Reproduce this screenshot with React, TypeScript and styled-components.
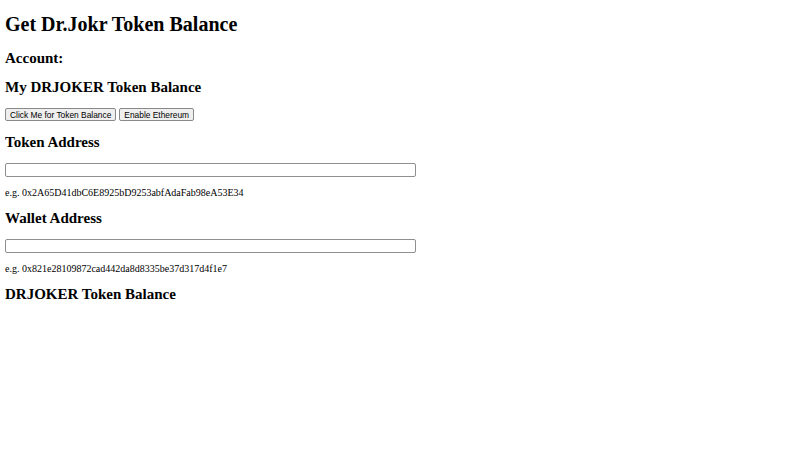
import React from "react";
import styled, { createGlobalStyle } from "styled-components";

const Global = createGlobalStyle`
  html, body { background: #fff; }
  body {
    margin: 5px;
    font-family: "Liberation Serif", "Times New Roman", serif;
    font-size: 10px;
    color: #000;
  }
`;

const Page = styled.main`
  display: block;
`;

const Title = styled.h1`
  font-size: 20px;
  font-weight: bold;
  margin: 8px 0 14px;
`;

const Heading = styled.h2`
  font-size: 15px;
  font-weight: bold;
  margin: 12.2px 0;
`;

const ButtonRow = styled.div`
  display: flex;
  gap: 3px;
  margin: 9.8px 0;
`;

const Button = styled.button`
  font-family: "Liberation Sans", Arial, sans-serif;
  font-size: 8.4px;
  height: 13px;
  padding: 0 4px;
  background: #efefef;
  color: #000;
  border: 1px solid #8a8a8a;
  border-radius: 2px;
  line-height: 1;
`;

const Field = styled.input`
  display: block;
  box-sizing: border-box;
  width: 411px;
  height: 14px;
  margin: 0;
  padding: 0 2px;
  border: 1px solid #8f8f8f;
  border-radius: 2px;
  background: #fff;
  font-family: "Liberation Sans", Arial, sans-serif;
  font-size: 8px;
`;

const Hint = styled.p`
  margin: 9.8px 0;
`;

export default function App() {
  return (
    <>
      <Global />
      <Page>
        <Title>Get Dr.Jokr Token Balance</Title>
        <Heading>Account:</Heading>
        <Heading>My DRJOKER Token Balance</Heading>
        <ButtonRow>
          <Button>Click Me for Token Balance</Button>
          <Button>Enable Ethereum</Button>
        </ButtonRow>
        <Heading>Token Address</Heading>
        <Field type="text" />
        <Hint>e.g. 0x2A65D41dbC6E8925bD9253abfAdaFab98eA53E34</Hint>
        <Heading>Wallet Address</Heading>
        <Field type="text" />
        <Hint>e.g. 0x821e28109872cad442da8d8335be37d317d4f1e7</Hint>
        <Heading>DRJOKER Token Balance</Heading>
      </Page>
    </>
  );
}
